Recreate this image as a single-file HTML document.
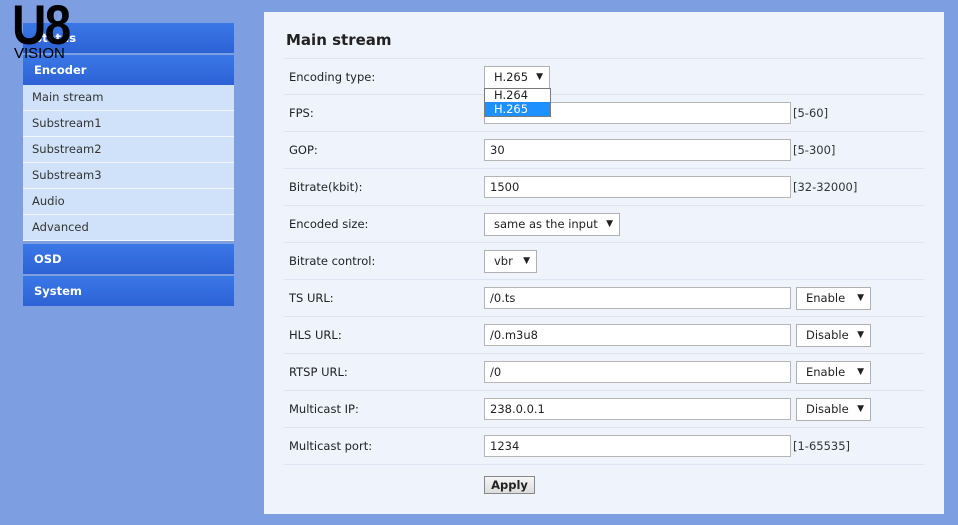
<!DOCTYPE html><html><head><style>
body{margin:0;width:958px;height:525px;background:#7d9ee0;font-family:"DejaVu Sans","Liberation Sans",sans-serif;font-size:11.5px;position:relative;overflow:hidden}
.a{position:absolute}
.side{left:23px;width:211px}
.h{background:linear-gradient(#3a78e6,#2d62d4);color:#fff;font-weight:bold;height:30px;line-height:30px;padding-left:11px;box-sizing:border-box}
.s{background:#cfe2fa;color:#333;height:26px;line-height:25px;padding-left:9px;box-sizing:border-box;border-bottom:1px solid #f2f7ff}
.main{left:264px;top:12px;width:680px;height:502px;background:#eef3fc}
.row{position:absolute;left:20px;width:640px;height:37px;border-bottom:1px solid #dde5f3;box-sizing:border-box}
.lbl{position:absolute;left:5px;top:0;line-height:37px;color:#222}
.in{position:absolute;left:200px;top:7px;width:307px;height:22px;background:#fff;border:1px solid #b5b5b5;box-sizing:border-box;padding-left:5px;line-height:20px;color:#222}
.sel{position:absolute;top:7px;height:23px;background:#fff;border:1px solid #b0b0b0;box-sizing:border-box;padding-left:9px;line-height:21px;color:#222}
.sel:after{content:"▼";position:absolute;right:6px;font-size:9px}
.rng{position:absolute;left:509px;line-height:37px;color:#333}
</style></head><body>
<div class="a side" style="top:23px"><div class="h">Status</div><div style="height:2px"></div><div class="h">Encoder</div>
<div class="s">Main stream</div><div class="s">Substream1</div><div class="s">Substream2</div><div class="s">Substream3</div><div class="s">Audio</div><div class="s">Advanced</div>
<div style="height:3px"></div><div class="h">OSD</div><div style="height:2px"></div><div class="h">System</div></div>
<div class="a" style="left:12px;top:0px;font:bold 56px/50px 'Liberation Sans',sans-serif;color:#000;transform:scaleX(0.85);transform-origin:left;letter-spacing:-2px">U8</div>
<div class="a" style="left:14px;top:46px;font:15px/16px 'Liberation Sans',sans-serif;color:#000">VISION</div>
<div class="a main">
<div class="a" style="left:22px;top:19px;font-weight:bold;font-size:15px;color:#222">Main stream</div>
<div class="row" style="top:46px;border-top:1px solid #dde5f3"><span class="lbl">Encoding type:</span><div class="sel" style="left:200px;width:66px">H.265</div></div>
<div class="row" style="top:83px"><span class="lbl">FPS:</span><div class="in"></div><span class="rng">[5-60]</span></div>
<div class="row" style="top:120px"><span class="lbl">GOP:</span><div class="in">30</div><span class="rng">[5-300]</span></div>
<div class="row" style="top:157px"><span class="lbl">Bitrate(kbit):</span><div class="in">1500</div><span class="rng">[32-32000]</span></div>
<div class="row" style="top:194px"><span class="lbl">Encoded size:</span><div class="sel" style="left:200px;width:136px">same as the input</div></div>
<div class="row" style="top:231px"><span class="lbl">Bitrate control:</span><div class="sel" style="left:200px;width:53px">vbr</div></div>
<div class="row" style="top:268px"><span class="lbl">TS URL:</span><div class="in">/0.ts</div><div class="sel" style="left:512px;width:75px">Enable</div></div>
<div class="row" style="top:305px"><span class="lbl">HLS URL:</span><div class="in">/0.m3u8</div><div class="sel" style="left:512px;width:75px">Disable</div></div>
<div class="row" style="top:342px"><span class="lbl">RTSP URL:</span><div class="in">/0</div><div class="sel" style="left:512px;width:75px">Enable</div></div>
<div class="row" style="top:379px"><span class="lbl">Multicast IP:</span><div class="in">238.0.0.1</div><div class="sel" style="left:512px;width:75px">Disable</div></div>
<div class="row" style="top:416px"><span class="lbl">Multicast port:</span><div class="in">1234</div><span class="rng">[1-65535]</span></div>
<div class="a" style="left:220px;top:464px;width:51px;height:18px;background:linear-gradient(#f6f6f6,#dcdcdc);border:1px solid #888;box-sizing:border-box;text-align:center;font-weight:bold;line-height:16px;color:#222">Apply</div>
<div class="a" style="left:220px;top:76px;width:67px;height:29px;background:#fff;border:1px solid #7a7a7a;box-sizing:border-box;color:#222">
<div style="height:13px;line-height:13px;padding-left:9px">H.264</div><div style="height:14px;line-height:14px;padding-left:9px;background:#1e90ff;color:#fff">H.265</div></div>
</div>
</body></html>
